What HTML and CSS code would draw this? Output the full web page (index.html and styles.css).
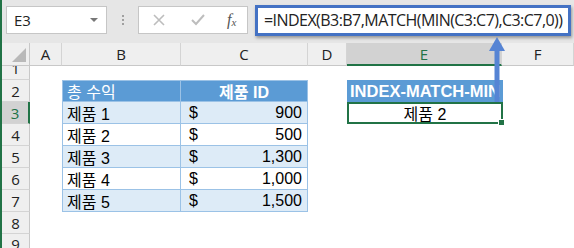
FILE: index.html
```html
<!DOCTYPE html>
<html lang="ko">

<head>
    <meta charset="UTF-8">
    <title>INDEX-MATCH-MIN</title>
    <link rel="stylesheet" href="styles.css">
</head>

<body>
    <div class="app">
        <header class="toolbar">
            <div class="namebox">E3<span class="caret"></span></div>
            <div class="dots"><i></i><i></i><i></i></div>
            <div class="buttons">
                <svg class="btn" width="14" height="14" viewBox="0 0 14 14">
                    <path d="M2 2 L12 12 M12 2 L2 12" stroke="#bdbdbd" stroke-width="1.6" fill="none" />
                </svg>
                <svg class="btn" width="16" height="14" viewBox="0 0 16 14">
                    <path d="M2 7 L6 11 L14 2" stroke="#bdbdbd" stroke-width="2" fill="none" />
                </svg>
                <span class="fx">f<sub>x</sub></span>
            </div>
            <div class="formula">=INDEX(B3:B7,MATCH(MIN(C3:C7),C3:C7,0))</div>
        </header>

        <div class="sheet">
            <div class="corner"><span></span></div>
            <div class="colhead">A</div>
            <div class="colhead">B</div>
            <div class="colhead">C</div>
            <div class="colhead">D</div>
            <div class="colhead sel">E</div>
            <div class="colhead">F</div>

            <div class="rowhead r1"><span>1</span></div>
            <div></div><div></div><div></div><div></div><div></div><div></div>

            <div class="rowhead">2</div>
            <div></div>
            <div class="t th first">총 수익</div>
            <div class="t th center">제품 ID</div>
            <div></div>
            <div class="result-head">INDEX-MATCH-MIN</div>
            <div></div>

            <div class="rowhead sel">3</div>
            <div></div>
            <div class="t band first">제품 1</div>
            <div class="t band money"><span>$</span><span>900</span></div>
            <div></div>
            <div class="result">제품 2<span class="handle"></span></div>
            <div></div>

            <div class="rowhead">4</div>
            <div></div>
            <div class="t first">제품 2</div>
            <div class="t money"><span>$</span><span>500</span></div>
            <div></div><div></div><div></div>

            <div class="rowhead">5</div>
            <div></div>
            <div class="t band first">제품 3</div>
            <div class="t band money"><span>$</span><span>1,300</span></div>
            <div></div><div></div><div></div>

            <div class="rowhead">6</div>
            <div></div>
            <div class="t first">제품 4</div>
            <div class="t money"><span>$</span><span>1,000</span></div>
            <div></div><div></div><div></div>

            <div class="rowhead">7</div>
            <div></div>
            <div class="t band first">제품 5</div>
            <div class="t band money"><span>$</span><span>1,500</span></div>
            <div></div><div></div><div></div>

            <div class="rowhead">8</div>
            <div></div><div></div><div></div><div></div><div></div><div></div>

            <div class="rowhead r9"><span>9</span></div>
            <div></div><div></div><div></div><div></div><div></div><div></div>
        </div>

        <!-- 수식 입력줄을 가리키는 화살표 -->
        <svg class="arrow" width="24" height="68" viewBox="0 0 24 68">
            <path d="M11 66 L11 12" stroke="#5684d4" stroke-width="5" fill="none" />
            <path d="M11 1 L3 15 L19 15 Z" fill="#5684d4" />
        </svg>
    </div>
</body>

</html>
```

FILE: styles.css
```css
body {
    margin: 0;
    overflow: hidden;
    background: #fff;
    font-family: "Liberation Sans", "Noto Sans CJK KR", sans-serif;
}

.app {
    position: relative;
    height: 248px;
    border-left: 2px solid #217346;
}

.toolbar {
    height: 43px;
    background: #e6e6e6;
    display: flex;
    align-items: flex-start;
    padding-top: 6px;
    box-sizing: border-box;
}

.namebox {
    margin-left: 4px;
    width: 101px;
    height: 28px;
    box-sizing: border-box;
    background: #fff;
    border: 1px solid #c6c6c6;
    display: flex;
    align-items: center;
    justify-content: space-between;
    padding: 0 8px 0 7px;
    font-family: "Open Sans", sans-serif;
    font-size: 15px;
    color: #222;
}

.caret {
    width: 0;
    height: 0;
    border-left: 4px solid transparent;
    border-right: 4px solid transparent;
    border-top: 4px solid #777;
}

.dots {
    width: 31px;
    display: flex;
    flex-direction: column;
    align-items: center;
    gap: 2px;
    padding-top: 9px;
}

.dots i {
    width: 2px;
    height: 2px;
    background: #a0a0a0;
}

.buttons {
    width: 110px;
    height: 28px;
    box-sizing: border-box;
    background: #fff;
    border: 1px solid #c6c6c6;
    display: flex;
    align-items: center;
    padding-left: 13px;
    gap: 24px;
}

.fx {
    font-family: "Liberation Serif", serif;
    font-style: italic;
    font-size: 16px;
    color: #555;
    margin-left: -3px;
}

.fx sub {
    font-size: 11px;
    vertical-align: -1px;
}

.formula {
    margin-left: 7px;
    margin-top: -1px;
    width: 316px;
    height: 31px;
    box-sizing: border-box;
    background: #fff;
    border: 3px solid #4472c4;
    box-shadow: 1px 2px 3px rgba(0, 0, 0, 0.35);
    padding-left: 6px;
    line-height: 25px;
    font-family: "Open Sans", sans-serif;
    font-size: 16px;
    letter-spacing: -0.55px;
    color: #222;
    white-space: nowrap;
}

.sheet {
    display: grid;
    grid-template-columns: 28px 32px 119px 127px 39px 155px 72px;
    grid-template-rows: 23px 14px repeat(8, 22px);
    font-size: 16px;
    color: #000;
}

.corner {
    background: #efefef;
    border-right: 1px solid #c8c8c8;
    border-bottom: 1px solid #c8c8c8;
    position: relative;
}

.corner span {
    position: absolute;
    right: 3px;
    bottom: 3px;
    width: 0;
    height: 0;
    border-left: 14px solid transparent;
    border-bottom: 14px solid #b9b9b9;
}

.colhead {
    background: #efefef;
    border-right: 1px solid #d4d4d4;
    border-bottom: 1px solid #c8c8c8;
    display: flex;
    align-items: center;
    justify-content: center;
    font-family: "Open Sans", sans-serif;
    font-size: 15px;
    color: #222;
}

.colhead.sel {
    background: #d2d2d2;
    border-bottom: 2px solid #217346;
    color: #217346;
}

.rowhead {
    background: #efefef;
    border-right: 1px solid #c8c8c8;
    border-bottom: 1px solid #d4d4d4;
    display: flex;
    align-items: center;
    justify-content: center;
    font-family: "Open Sans", sans-serif;
    font-size: 15px;
    color: #222;
    overflow: hidden;
}

.rowhead.r1 span {
    margin-top: -10px;
}

.rowhead.r9 {
    align-items: flex-start;
}

.rowhead.sel {
    background: #d2d2d2;
    border-right: 2px solid #217346;
    color: #217346;
}

.t {
    border-right: 1px solid #9bc2e6;
    border-bottom: 1px solid #9bc2e6;
    display: flex;
    align-items: center;
    padding: 0 4px;
    white-space: nowrap;
}

.t.first {
    border-left: 1px solid #9bc2e6;
}

.th {
    background: #5b9bd5;
    color: #fff;
    border-top: 1px solid #9bc2e6;
}

.th.center {
    justify-content: center;
    font-weight: bold;
}

.band {
    background: #ddebf7;
}

.money {
    justify-content: space-between;
    padding: 0 5px 0 8px;
}

.result-head {
    background: #5b9bd5;
    color: #fff;
    font-weight: bold;
    font-size: 16.5px;
    display: flex;
    align-items: center;
    padding-left: 3px;
    overflow: hidden;
    white-space: nowrap;
    margin-right: -1px;
}

.result {
    border: 2px solid #217346;
    display: flex;
    align-items: center;
    justify-content: center;
    position: relative;
    margin-right: -1px;
}

.handle {
    position: absolute;
    right: -4px;
    bottom: -4px;
    width: 5px;
    height: 5px;
    background: #217346;
    border: 1px solid #fff;
}

.arrow {
    position: absolute;
    left: 484px;
    top: 36px;
}
```
